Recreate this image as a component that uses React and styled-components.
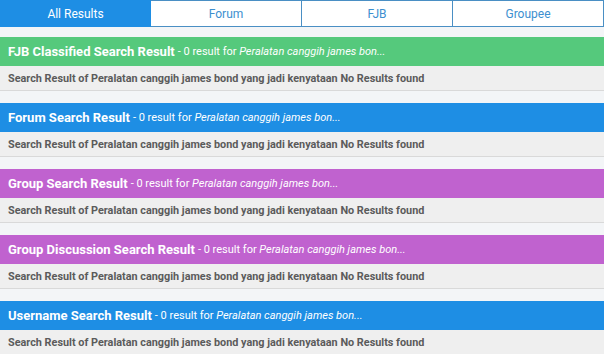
import React from "react";
import styled, { createGlobalStyle } from "styled-components";

const GlobalStyle = createGlobalStyle`
  html, body {
    margin: 0;
    padding: 0;
    background: #f3f5f7;
    font-family: Roboto, "Liberation Sans", sans-serif;
  }
`;

const Page = styled.div`
  width: 604px;
  height: 354px;
  overflow: hidden;
`;

const TabBar = styled.div`
  display: grid;
  grid-template-columns: repeat(4, 1fr);
  height: 27px;
  margin-bottom: 10px;
`;

const Tab = styled.div`
  display: flex;
  align-items: center;
  justify-content: center;
  font-size: 12px;
  color: ${props => (props.active ? "#fff" : "#3d8fcf")};
  background: ${props => (props.active ? "#1e8ee4" : "#fff")};
  border: 1px solid ${props => (props.active ? "#1e8ee4" : "#4a8fc4")};
  border-left-width: ${props => (props.first ? "1px" : "0")};
  box-sizing: border-box;
`;

const Section = styled.div`
  margin-bottom: 12px;
`;

const Header = styled.div`
  height: 29px;
  display: flex;
  align-items: center;
  padding: 0 8px;
  background: ${props => props.color};
  color: #fff;
  font-size: 11px;
  white-space: nowrap;
`;

const Title = styled.span`
  font-weight: 700;
  font-size: 13px;
`;

const Meta = styled.span`
  margin-left: 3px;
`;

const Query = styled.em`
  font-style: italic;
`;

const Body = styled.div`
  height: 24px;
  display: flex;
  align-items: center;
  padding: 0 8px;
  background: #efefef;
  border-bottom: 1px solid #d9d9d9;
  color: #5b5b5b;
  font-size: 10.85px;
  font-weight: 700;
`;

const tabs = ["All Results", "Forum", "FJB", "Groupee"];

const sections = [
  { title: "FJB Classified Search Result", color: "#55c97c" },
  { title: "Forum Search Result", color: "#1e8ee4" },
  { title: "Group Search Result", color: "#c062cf" },
  { title: "Group Discussion Search Result", color: "#c062cf" },
  { title: "Username Search Result", color: "#1e8ee4" },
];

export default function App() {
  return (
    <Page>
      <GlobalStyle />
      <TabBar>
        {tabs.map((t, i) => (
          <Tab key={t} active={i === 0} first={i === 0}>
            {t}
          </Tab>
        ))}
      </TabBar>
      {sections.map(s => (
        <Section key={s.title}>
          <Header color={s.color}>
            <Title>{s.title}</Title>
            <Meta>
              - 0 result for <Query>Peralatan canggih james bon...</Query>
            </Meta>
          </Header>
          <Body>
            Search Result of Peralatan canggih james bond yang jadi kenyataan No Results found
          </Body>
        </Section>
      ))}
    </Page>
  );
}
